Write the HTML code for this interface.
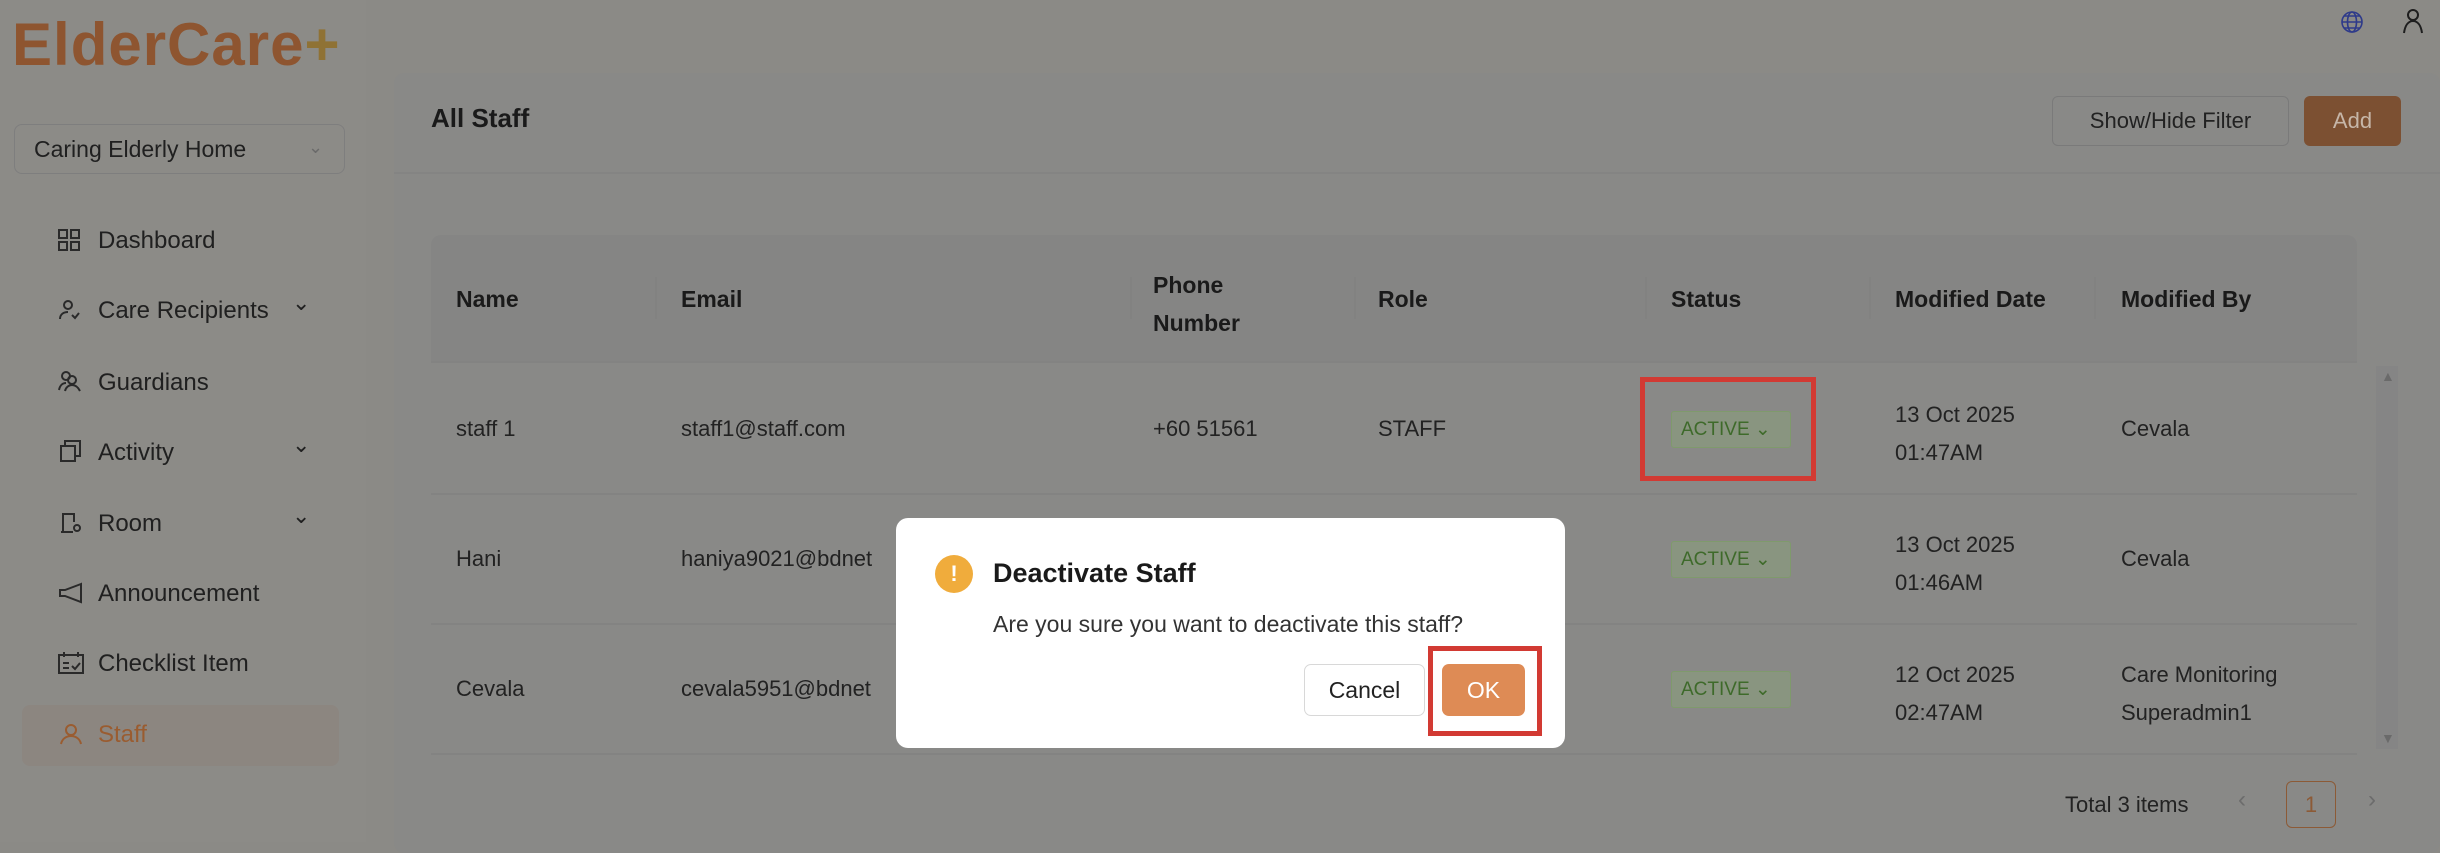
<!DOCTYPE html>
<html><head><meta charset="utf-8"><style>
*{margin:0;padding:0;box-sizing:border-box}
body{width:2440px;height:842px;overflow:hidden;background:#8b8a86;font-family:"Liberation Sans",sans-serif;color:#1e1e1e;position:relative}
.a{position:absolute;white-space:nowrap}
.side{left:0;top:0;width:366px;height:842px;background:#8c8b87}
.card{left:394px;top:73px;width:2046px;height:780px;background:#898987;border-radius:10px}
.menu{font-size:24px;color:#202020}
.th{font-size:23px;font-weight:bold;color:#1a1a1a}
.td{font-size:22px;color:#222}
.sep{position:absolute;width:2px;height:42px;top:277px;background:#828281}
.badge{position:absolute;left:1671px;width:120px;height:37px;border:1px solid #7f9a6c;background:#899580;color:#3e6a2a;font-size:19px;border-radius:3px;line-height:35px;padding-left:9px}
.row{position:absolute;left:431px;width:1926px;height:2px;background:#838382}
</style></head><body>
<div class="a side"></div>
<div class="a" style="left:12px;top:10px;font-size:60px;font-weight:bold;color:#8e5530;letter-spacing:1px">ElderCare<span style="color:#8f7235">+</span></div>
<div class="a" style="left:14px;top:124px;width:331px;height:50px;border:1px solid #7e7e7e;border-radius:8px;font-size:23px;line-height:48px;padding-left:19px;color:#202020">Caring Elderly Home<span style="position:absolute;left:293px;top:-2px;color:#6a6a6a;font-size:18px">&#8964;</span></div>
<div class="a" style="left:22px;top:705px;width:317px;height:61px;background:#8c8680;border-radius:8px"></div>
<svg class="a" style="left:58px;top:229px" width="22" height="22" fill="none" stroke="#2a2a2a" stroke-width="2"><rect x="1" y="1" width="8" height="8"/><rect x="13" y="1" width="8" height="8"/><rect x="1" y="13" width="8" height="8"/><rect x="13" y="13" width="8" height="8"/></svg>
<div class="a menu" style="left:98px;top:227px">Dashboard</div>
<svg class="a" style="left:58px;top:299px" width="24" height="22" fill="none" stroke="#2a2a2a" stroke-width="2"><circle cx="10" cy="6" r="4"/><path d="M2 20c0-5 4-7 8-7M14 16l3 3 4-5"/></svg>
<div class="a menu" style="left:98px;top:297px">Care Recipients</div>
<div class="a menu" style="left:292px;top:290px;font-size:22px">&#8964;</div>
<svg class="a" style="left:58px;top:370px" width="24" height="22" fill="none" stroke="#2a2a2a" stroke-width="2"><circle cx="8" cy="6" r="4"/><circle cx="14" cy="10" r="4"/><path d="M1 20c1-5 4-7 7-7M7 21c1-4 4-6 7-6s6 2 8 6"/></svg>
<div class="a menu" style="left:98px;top:369px">Guardians</div>
<svg class="a" style="left:60px;top:440px" width="22" height="22" fill="none" stroke="#2a2a2a" stroke-width="2"><rect x="1" y="6" width="14" height="15"/><path d="M5 6V1h15v15h-5"/></svg>
<div class="a menu" style="left:98px;top:439px">Activity</div>
<div class="a menu" style="left:292px;top:432px;font-size:22px">&#8964;</div>
<svg class="a" style="left:60px;top:512px" width="24" height="22" fill="none" stroke="#2a2a2a" stroke-width="2"><path d="M3 20V2h11v8M1 20h12"/><circle cx="17" cy="16" r="3"/></svg>
<div class="a menu" style="left:98px;top:510px">Room</div>
<div class="a menu" style="left:292px;top:503px;font-size:22px">&#8964;</div>
<svg class="a" style="left:59px;top:582px" width="24" height="22" fill="none" stroke="#2a2a2a" stroke-width="2"><path d="M22 2L6 8H1v6h5l16 6z"/></svg>
<div class="a menu" style="left:98px;top:580px">Announcement</div>
<svg class="a" style="left:58px;top:652px" width="26" height="22" fill="none" stroke="#2a2a2a" stroke-width="2"><rect x="1" y="3" width="24" height="18"/><path d="M6 0v5M20 0v5M5 11h6M5 16h6M14 14l3 3 5-6"/></svg>
<div class="a menu" style="left:98px;top:650px">Checklist Item</div>
<svg class="a" style="left:60px;top:723px" width="22" height="22" fill="none" stroke="#9a5c30" stroke-width="2"><circle cx="11" cy="7" r="5"/><path d="M1 21c1-5 5-8 10-8s9 3 10 8"/></svg>
<div class="a menu" style="left:98px;top:721px;color:#9a5c30">Staff</div>

<svg class="a" style="left:2340px;top:10px" width="24" height="24" fill="none" stroke="#2e3a8a" stroke-width="1.6"><circle cx="12" cy="12" r="10"/><ellipse cx="12" cy="12" rx="4.5" ry="10"/><path d="M2 12h20M4 6h16M4 18h16"/></svg>
<svg class="a" style="left:2402px;top:8px" width="22" height="26" fill="none" stroke="#1e1e1e" stroke-width="2"><circle cx="11" cy="7" r="5"/><path d="M2 25c1-7 4-12 9-12s8 5 9 12"/></svg>

<div class="a card"></div>
<div class="a" style="left:394px;top:172px;width:2046px;height:2px;background:#848483"></div>
<div class="a" style="left:431px;top:103px;font-size:26px;font-weight:bold;color:#1a1a1a">All Staff</div>
<div class="a" style="left:2052px;top:96px;width:237px;height:50px;border:1px solid #7a7a7a;border-radius:6px;font-size:22px;line-height:48px;text-align:center;color:#222">Show/Hide Filter</div>
<div class="a" style="left:2304px;top:96px;width:97px;height:50px;background:#7c5032;border-radius:6px;font-size:22px;line-height:50px;text-align:center;color:#c6b6a8">Add</div>

<div class="a" style="left:431px;top:235px;width:1926px;height:126px;background:#858584;border-radius:10px 10px 0 0"></div>
<div class="sep" style="left:655px"></div><div class="sep" style="left:1130px"></div><div class="sep" style="left:1354px"></div><div class="sep" style="left:1645px"></div><div class="sep" style="left:1869px"></div><div class="sep" style="left:2094px"></div>
<div class="a th" style="left:456px;top:286px">Name</div>
<div class="a th" style="left:681px;top:286px">Email</div>
<div class="a th" style="left:1153px;top:266px;line-height:38px">Phone<br>Number</div>
<div class="a th" style="left:1378px;top:286px">Role</div>
<div class="a th" style="left:1671px;top:286px">Status</div>
<div class="a th" style="left:1895px;top:286px">Modified Date</div>
<div class="a th" style="left:2121px;top:286px">Modified By</div>
<div class="a" style="left:2376px;top:366px;width:22px;height:383px;background:#858585"></div>
<div class="a" style="left:2381px;top:368px;font-size:14px;color:#6a6a6a">&#9650;</div>
<div class="a" style="left:2381px;top:730px;font-size:14px;color:#6a6a6a">&#9660;</div>
<div class="row" style="top:361px"></div><div class="row" style="top:493px"></div><div class="row" style="top:623px"></div><div class="row" style="top:753px"></div>

<div class="a td" style="left:456px;top:416px">staff 1</div>
<div class="a td" style="left:681px;top:416px">staff1@staff.com</div>
<div class="a td" style="left:1153px;top:416px">+60 51561</div>
<div class="a td" style="left:1378px;top:416px">STAFF</div>
<div class="badge" style="top:411px">ACTIVE &#8964;</div>
<div class="a td" style="left:1895px;top:396px;line-height:38px">13 Oct 2025<br>01:47AM</div>
<div class="a td" style="left:2121px;top:416px">Cevala</div>

<div class="a td" style="left:456px;top:546px">Hani</div>
<div class="a td" style="left:681px;top:546px">haniya9021@bdnet</div>
<div class="badge" style="top:541px">ACTIVE &#8964;</div>
<div class="a td" style="left:1895px;top:526px;line-height:38px">13 Oct 2025<br>01:46AM</div>
<div class="a td" style="left:2121px;top:546px">Cevala</div>

<div class="a td" style="left:456px;top:676px">Cevala</div>
<div class="a td" style="left:681px;top:676px">cevala5951@bdnet</div>
<div class="badge" style="top:671px">ACTIVE &#8964;</div>
<div class="a td" style="left:1895px;top:656px;line-height:38px">12 Oct 2025<br>02:47AM</div>
<div class="a td" style="left:2121px;top:656px;line-height:38px">Care Monitoring<br>Superadmin1</div>

<div class="a td" style="left:2065px;top:792px">Total 3 items</div>
<div class="a" style="left:2238px;top:786px;font-size:24px;color:#6c6c6c">&#8249;</div>
<div class="a" style="left:2286px;top:781px;width:50px;height:47px;border:1px solid #8c5a36;border-radius:6px;font-size:22px;line-height:45px;text-align:center;color:#8c5a36">1</div>
<div class="a" style="left:2368px;top:786px;font-size:24px;color:#6c6c6c">&#8250;</div>

<div class="a" style="left:1640px;top:377px;width:176px;height:104px;border:5px solid #d23a33"></div>

<div class="a" style="left:896px;top:518px;width:669px;height:230px;background:#fff;border-radius:12px"></div>
<div class="a" style="left:935px;top:555px;width:38px;height:38px;border-radius:50%;background:#f0ac3c;color:#fff;font-size:22px;font-weight:bold;text-align:center;line-height:38px">!</div>
<div class="a" style="left:993px;top:558px;font-size:27px;font-weight:bold;color:#1a1a1a">Deactivate Staff</div>
<div class="a" style="left:993px;top:611px;font-size:23px;color:#333">Are you sure you want to deactivate this staff?</div>
<div class="a" style="left:1304px;top:664px;width:121px;height:52px;border:1px solid #d8d8d8;border-radius:7px;font-size:23px;line-height:50px;text-align:center;color:#222">Cancel</div>
<div class="a" style="left:1442px;top:664px;width:83px;height:52px;background:#de8b55;border-radius:7px;font-size:23px;line-height:52px;text-align:center;color:#fff">OK</div>
<div class="a" style="left:1428px;top:646px;width:114px;height:90px;border:5px solid #d23a33"></div>
</body></html>
